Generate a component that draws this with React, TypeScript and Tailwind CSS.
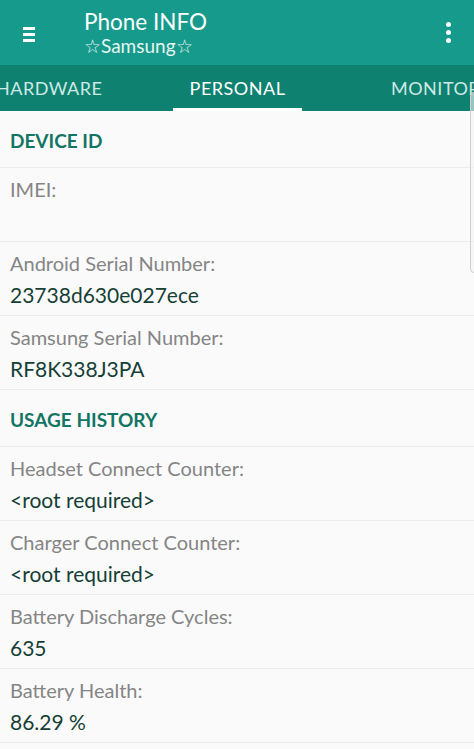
import React from "react";

const Row = ({ label, value }: { label: string; value: string }) => (
  <div className="h-[74px] border-b border-[#ececec] pl-[10px] pt-[9px]">
    <div className="text-[20px] leading-[24px] text-[#858585]">{label}</div>
    <div className="mt-[8px] text-[21px] leading-[24px] text-[#163f36]">{value}</div>
  </div>
);

const Section = ({ title }: { title: string }) => (
  <div className="h-[57px] border-b border-[#ececec] pl-[10px] pt-[16px]">
    <div className="text-[19px] leading-[28px] font-bold text-[#137563]">{title}</div>
  </div>
);

export default function App() {
  return (
    <div className="relative w-[474px] h-[749px] overflow-hidden bg-[#fafafa] font-['Lato',sans-serif]">
      <div className="h-[65px] bg-[#169a8b] flex items-center">
        <div className="ml-[23px] w-[12px] flex flex-col gap-[3px] mt-[3px]">
          <div className="h-[3px] bg-white" />
          <div className="h-[3px] bg-white" />
          <div className="h-[3px] bg-white" />
        </div>
        <div className="ml-[49px] flex flex-col text-white">
          <div className="text-[22.5px] leading-[26px]">Phone INFO</div>
          <div className="text-[19px] leading-[22px] text-[#e6f5f2]">☆Samsung☆</div>
        </div>
        <div className="ml-auto mr-[23px] flex flex-col gap-[3px] items-center">
          <div className="w-[5px] h-[5px] rounded-full bg-white" />
          <div className="w-[5px] h-[5px] rounded-full bg-white" />
          <div className="w-[5px] h-[5px] rounded-full bg-white" />
        </div>
      </div>
      <div className="h-[46px] bg-[#0e8171] flex items-stretch overflow-hidden whitespace-nowrap text-[18px] tracking-[0.5px]">
        <div className="w-[173px] shrink-0 flex items-center">
          <span className="ml-[-4px] text-[#cfe9e4]">HARDWARE</span>
        </div>
        <div className="w-[129px] shrink-0 flex items-center justify-center border-b-[3px] border-white pt-[3px] text-white">
          PERSONAL
        </div>
        <div className="shrink-0 flex items-center pl-[89px] text-[#cfe9e4]">MONITOR</div>
      </div>
      <Section title="DEVICE ID" />
      <Row label="IMEI:" value="" />
      <Row label="Android Serial Number:" value="23738d630e027ece" />
      <Row label="Samsung Serial Number:" value="RF8K338J3PA" />
      <Section title="USAGE HISTORY" />
      <Row label="Headset Connect Counter:" value="<root required>" />
      <Row label="Charger Connect Counter:" value="<root required>" />
      <Row label="Battery Discharge Cycles:" value="635" />
      <Row label="Battery Health:" value="86.29 %" />
      <div className="absolute left-[470px] top-[92px] w-[12px] h-[181px] border border-[#d0d0d0] rounded-[4px] bg-[#f4f4f4]/60" />
    </div>
  );
}
